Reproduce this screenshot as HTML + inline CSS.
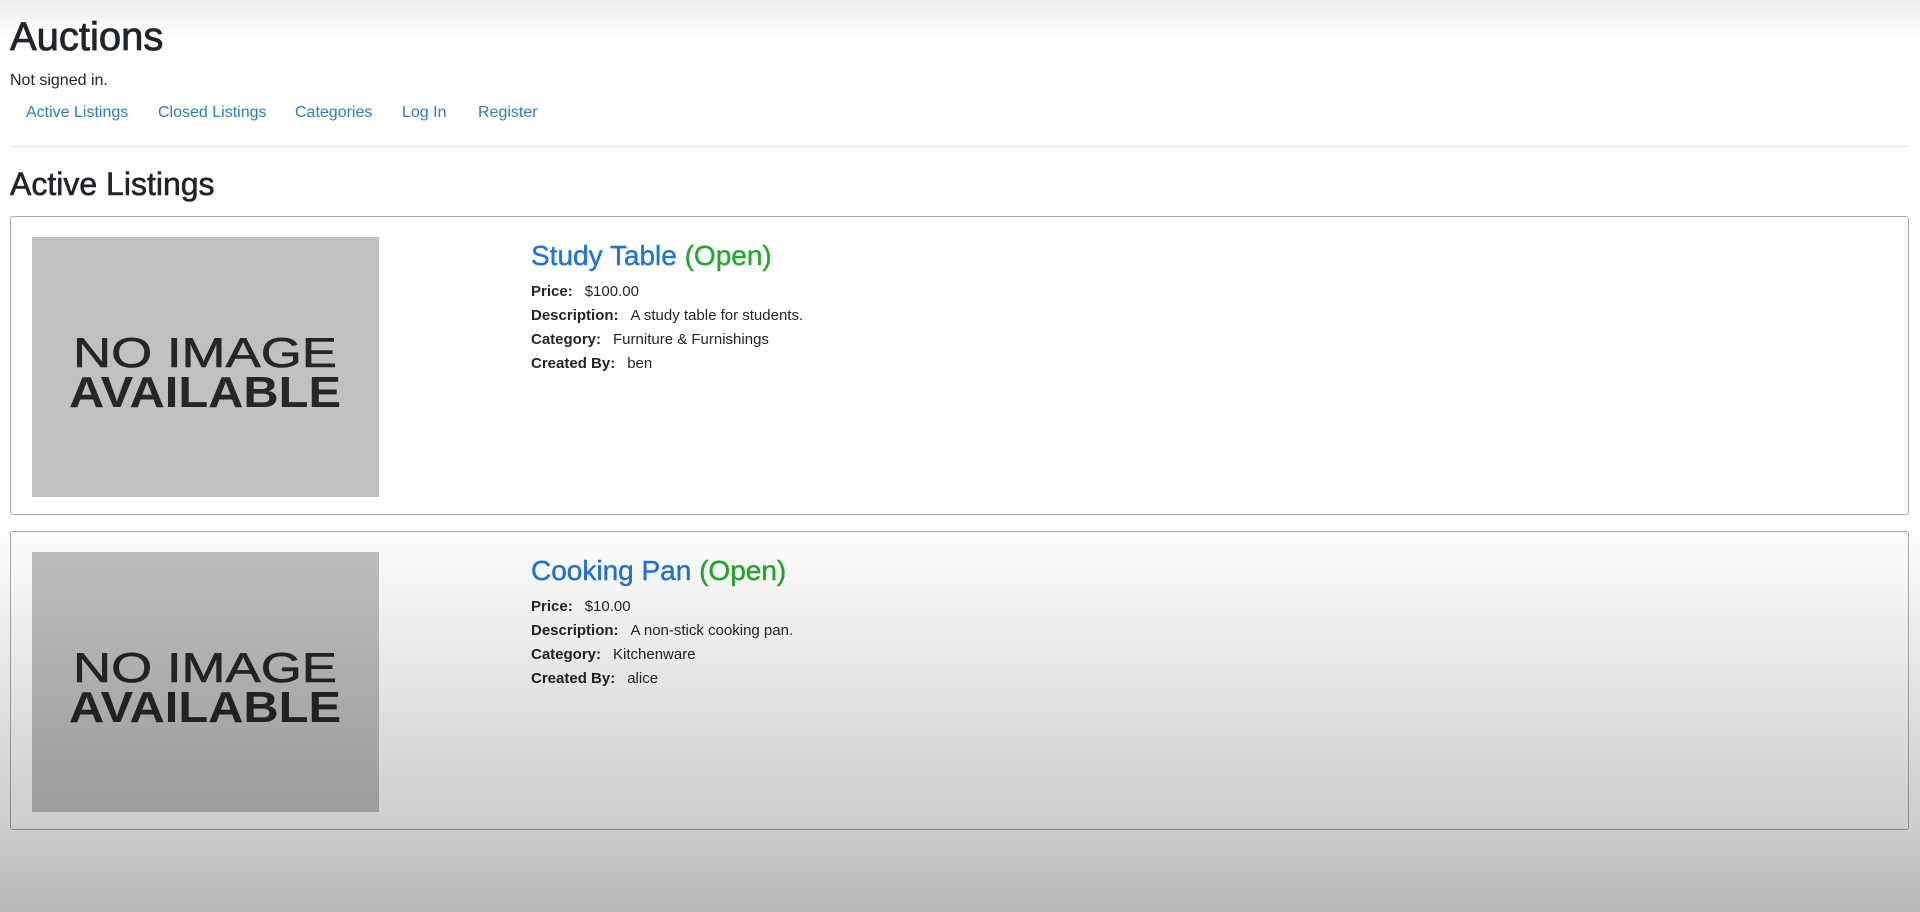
<!DOCTYPE html>
<html><head><meta charset="utf-8">
<style>
html,body{margin:0;padding:0}
body{width:1920px;height:912px;position:relative;overflow:hidden;background:#fff;font-family:"Liberation Sans",sans-serif;color:#212529}
.abs{position:absolute;white-space:nowrap}
h1{position:absolute;left:10px;top:13px;margin:0;font-size:40px;font-weight:500;line-height:48px;-webkit-text-stroke:0.8px #212529}
.ns{left:10px;top:71px;font-size:16px;line-height:20px}
.nav{top:103px;font-size:16px;color:#2f7bbf;line-height:20px}
hr{position:absolute;left:10px;top:146px;width:1899px;margin:0;border:0;border-top:1px solid #e2e2e2}
h2{position:absolute;left:10px;top:164px;margin:0;font-size:32px;font-weight:500;line-height:40px;-webkit-text-stroke:0.6px #212529}
.card{position:absolute;left:10px;width:1897px;height:297px;border:1px solid #a9a9a9;border-radius:3px;background:#fff}
.img{position:absolute;left:21px;top:20px;width:347px;height:260px;background:#c1c1c1}
.title{position:absolute;left:520px;top:21px;font-size:28px;line-height:36px;color:#1f74d6;white-space:nowrap;-webkit-text-stroke:0.4px #1f74d6}
.title span{color:#22a82c;-webkit-text-stroke:0.4px #22a82c}
.row{position:absolute;left:520px;font-size:15px;line-height:20px;white-space:nowrap}
.row b{margin-right:12px}
.ov{position:absolute;left:0;top:0;width:1920px;height:912px;pointer-events:none;
background:linear-gradient(to bottom,rgba(0,0,0,0.07) 0px,rgba(0,0,0,0) 40px,rgba(0,0,0,0) 520px,rgba(0,0,0,0.2) 830px,rgba(0,0,0,0.28) 912px)}
</style></head><body>
<h1>Auctions</h1>
<div class="abs ns">Not signed in.</div>
<div class="abs nav" style="left:26px">Active Listings</div>
<div class="abs nav" style="left:158px">Closed Listings</div>
<div class="abs nav" style="left:295px">Categories</div>
<div class="abs nav" style="left:402px">Log In</div>
<div class="abs nav" style="left:478px">Register</div>
<hr>
<h2>Active Listings</h2>

<div class="card" style="top:216px">
  <div class="img"><svg width="347" height="260">
    <text x="173" y="130" text-anchor="middle" font-family="Liberation Sans" font-size="42" fill="#262626" stroke="#262626" stroke-width="0.6" textLength="264" lengthAdjust="spacingAndGlyphs">NO IMAGE</text>
    <text x="173" y="170" text-anchor="middle" font-family="Liberation Sans" font-weight="bold" font-size="44" fill="#262626" textLength="272" lengthAdjust="spacingAndGlyphs">AVAILABLE</text>
  </svg></div>
  <div class="title">Study Table <span>(Open)</span></div>
  <div class="row" style="top:65px"><b>Price:</b>$100.00</div>
  <div class="row" style="top:89px"><b>Description:</b>A study table for students.</div>
  <div class="row" style="top:113px"><b>Category:</b>Furniture &amp; Furnishings</div>
  <div class="row" style="top:137px"><b>Created By:</b>ben</div>
</div>

<div class="card" style="top:531px">
  <div class="img"><svg width="347" height="260">
    <text x="173" y="130" text-anchor="middle" font-family="Liberation Sans" font-size="42" fill="#262626" stroke="#262626" stroke-width="0.6" textLength="264" lengthAdjust="spacingAndGlyphs">NO IMAGE</text>
    <text x="173" y="170" text-anchor="middle" font-family="Liberation Sans" font-weight="bold" font-size="44" fill="#262626" textLength="272" lengthAdjust="spacingAndGlyphs">AVAILABLE</text>
  </svg></div>
  <div class="title">Cooking Pan <span>(Open)</span></div>
  <div class="row" style="top:65px"><b>Price:</b>$10.00</div>
  <div class="row" style="top:89px"><b>Description:</b>A non-stick cooking pan.</div>
  <div class="row" style="top:113px"><b>Category:</b>Kitchenware</div>
  <div class="row" style="top:137px"><b>Created By:</b>alice</div>
</div>
<div class="ov"></div>
</body></html>
